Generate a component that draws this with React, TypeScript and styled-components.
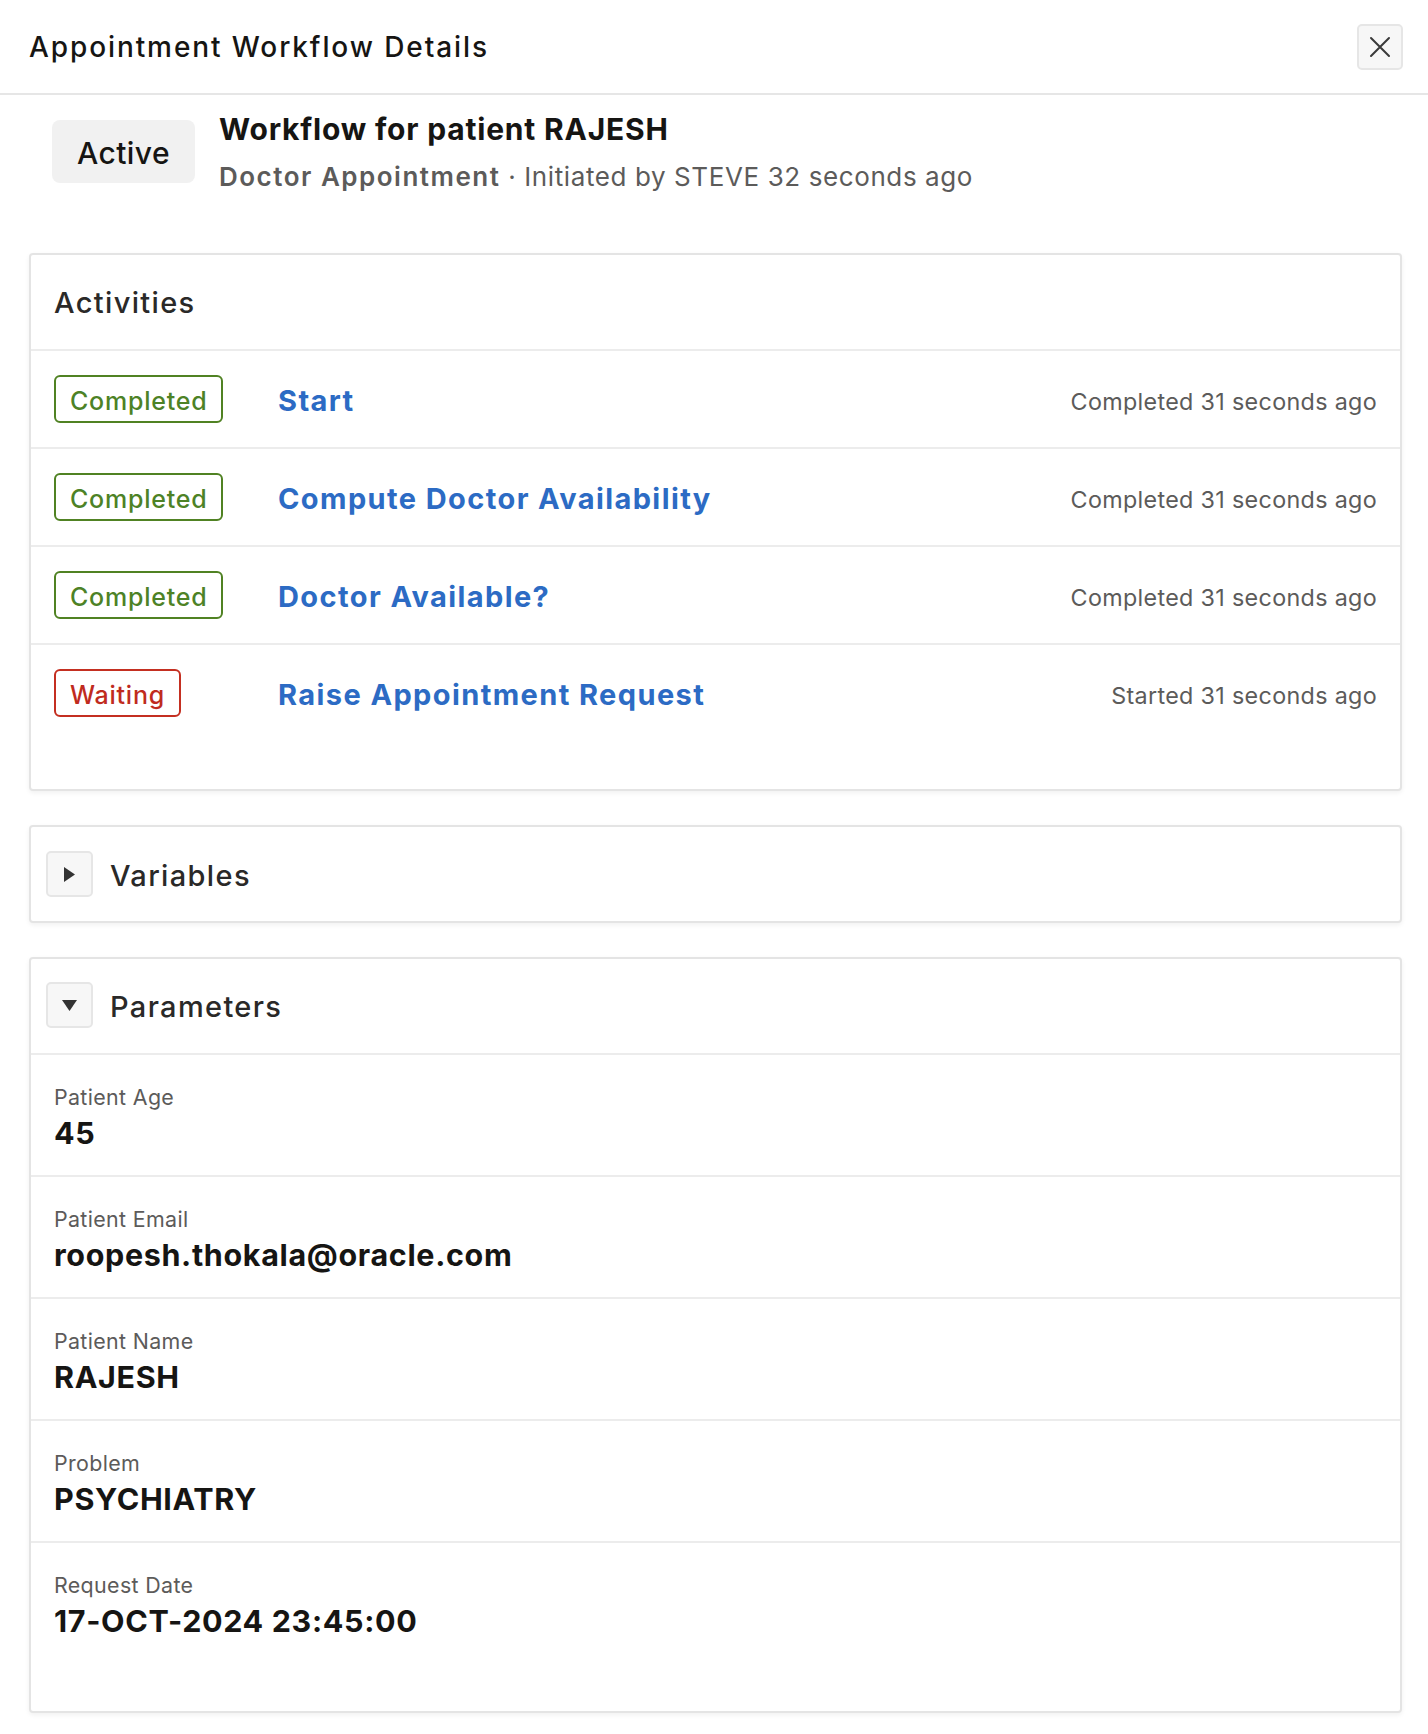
import React from "react";
import styled, { createGlobalStyle } from "styled-components";

const GlobalStyle = createGlobalStyle`
  html, body { margin: 0; padding: 0; background: #ffffff; }
  body {
    font-family: Inter, "Noto Sans", "Liberation Sans", sans-serif;
    color: #161513;
    -webkit-font-smoothing: antialiased;
  }
  * { box-sizing: border-box; }
`;

const Page = styled.div`
  width: 1428px;
  min-height: 1734px;
  background: #fff;
`;

const Header = styled.header`
  height: 95px;
  display: flex;
  align-items: center;
  justify-content: space-between;
  padding: 0 25px 0 29px;
  border-bottom: 2px solid #e6e6e6;
`;

const HeaderTitle = styled.h1`
  margin: 0;
  font-size: 28px;
  line-height: 36px;
  font-weight: 500;
  letter-spacing: 1.9px;
  color: #161513;
`;

const CloseButton = styled.button`
  width: 46px;
  height: 46px;
  padding: 0;
  display: flex;
  align-items: center;
  justify-content: center;
  background: #f7f7f7;
  border: 2px solid #e6e6e6;
  border-radius: 5px;
  color: #3a3a3a;
  cursor: pointer;
`;

const Main = styled.main`
  display: flex;
  flex-direction: column;
  gap: 34px;
  padding: 0 26px 20px 29px;
`;

const Summary = styled.section`
  display: flex;
  align-items: flex-start;
  gap: 24px;
  padding: 16px 0 0 23px;
  margin-bottom: 26px;
`;

const StateBadge = styled.div`
  margin-top: 9px;
  width: 143px;
  height: 63px;
  padding-top: 2px;
  display: flex;
  align-items: center;
  justify-content: center;
  background: #f1f1f1;
  border-radius: 8px;
  font-size: 30px;
  font-weight: 500;
  letter-spacing: 0.45px;
  color: #161513;
`;

const SummaryText = styled.div`
  display: flex;
  flex-direction: column;
`;

const WorkflowTitle = styled.div`
  font-size: 30px;
  line-height: 36px;
  font-weight: 700;
  letter-spacing: 0.8px;
  color: #161513;
`;

const SubLine = styled.div`
  margin-top: 14px;
  font-size: 26px;
  line-height: 32px;
  font-weight: 400;
  letter-spacing: 0.6px;
  color: #5c5b5a;
`;

const Strong = styled.span`
  font-weight: 600;
  letter-spacing: 1.5px;
`;

const Card = styled.section<{ $padBottom?: boolean }>`
  display: flex;
  flex-direction: column;
  border: 2px solid #e4e4e4;
  border-radius: 4px;
  background: #fff;
  box-shadow: 0 2px 5px rgba(0, 0, 0, 0.06);
  padding-bottom: ${(p) => (p.$padBottom ? "48px" : "0")};
`;

const CardHeader = styled.div<{ $divider?: boolean; $withToggle?: boolean }>`
  height: ${(p) => (p.$divider ? "96px" : "94px")};
  display: flex;
  align-items: center;
  gap: 17px;
  padding: 0 24px ${(p) => (p.$divider ? "2px" : "0")} ${(p) => (p.$withToggle ? "15px" : "23px")};
  border-bottom: ${(p) => (p.$divider ? "2px solid #ececec" : "none")};
`;

const CardTitle = styled.h2`
  margin: 0;
  padding-top: 4px;
  font-size: 29px;
  line-height: 36px;
  font-weight: 500;
  letter-spacing: 1.35px;
  color: #2a2928;
`;

const ToggleButton = styled.button`
  width: 47px;
  height: 46px;
  padding: 0;
  display: flex;
  align-items: center;
  justify-content: center;
  background: #f7f7f7;
  border: 2px solid #e6e6e6;
  border-radius: 5px;
  color: #333;
  cursor: pointer;
`;

const ActivityRow = styled.div<{ $last?: boolean }>`
  height: ${(p) => (p.$last ? "96px" : "98px")};
  display: grid;
  grid-template-columns: 224px 1fr auto;
  align-items: center;
  padding: 0 23px 0 23px;
  border-bottom: ${(p) => (p.$last ? "none" : "2px solid #ececec")};
`;

const StatusBadge = styled.span<{ $tone: "success" | "danger" }>`
  justify-self: start;
  height: 48px;
  display: inline-flex;
  align-items: center;
  padding: 3px 14px 0;
  border: 2px solid ${(p) => (p.$tone === "success" ? "#508223" : "#c42f21")};
  border-radius: 6px;
  font-size: 25px;
  font-weight: 500;
  letter-spacing: 0.77px;
  color: ${(p) => (p.$tone === "success" ? "#4d8226" : "#c02b1e")};
`;

const ActivityLink = styled.a`
  padding-top: 4px;
  font-size: 29px;
  line-height: 36px;
  font-weight: 700;
  letter-spacing: 1.4px;
  color: #2c6bc4;
  text-decoration: none;
  cursor: pointer;
`;

const ActivityTime = styled.span`
  padding-top: 4px;
  font-size: 23.3px;
  font-weight: 400;
  letter-spacing: 0.33px;
  color: #5c5b5a;
`;

const ParamRow = styled.div<{ $last?: boolean }>`
  height: ${(p) => (p.$last ? "120px" : "122px")};
  display: flex;
  flex-direction: column;
  padding: 30px 24px 0 23px;
  border-bottom: ${(p) => (p.$last ? "none" : "2px solid #ececec")};
`;

const ParamLabel = styled.div`
  font-size: 21.4px;
  line-height: 24px;
  font-weight: 400;
  letter-spacing: 0.35px;
  color: #5c5b5a;
`;

const ParamValue = styled.div`
  margin-top: 6px;
  font-size: 30.5px;
  line-height: 36px;
  font-weight: 700;
  letter-spacing: 0.65px;
  color: #161513;
`;

const CloseIcon = () => (
  <svg width="22" height="22" viewBox="0 0 22 22" fill="none" stroke="currentColor" strokeWidth="2" strokeLinecap="round">
    <path d="M2 2 L20 20 M20 2 L2 20" />
  </svg>
);

const CaretRight = () => (
  <svg width="13" height="17" viewBox="0 0 13 17">
    <path d="M1 1 L12 8.5 L1 16 Z" fill="currentColor" />
  </svg>
);

const CaretDown = () => (
  <svg width="17" height="13" viewBox="0 0 17 13">
    <path d="M1 1 L16 1 L8.5 12 Z" fill="currentColor" />
  </svg>
);

type Activity = { status: "Completed" | "Waiting"; name: string; time: string };

const activities: Activity[] = [
  { status: "Completed", name: "Start", time: "Completed 31 seconds ago" },
  { status: "Completed", name: "Compute Doctor Availability", time: "Completed 31 seconds ago" },
  { status: "Completed", name: "Doctor Available?", time: "Completed 31 seconds ago" },
  { status: "Waiting", name: "Raise Appointment Request", time: "Started 31 seconds ago" },
];

const parameters = [
  { label: "Patient Age", value: "45" },
  { label: "Patient Email", value: "roopesh.thokala@oracle.com" },
  { label: "Patient Name", value: "RAJESH" },
  { label: "Problem", value: "PSYCHIATRY" },
  { label: "Request Date", value: "17-OCT-2024 23:45:00" },
];

export default function App() {
  return (
    <Page>
      <GlobalStyle />
      <Header>
        <HeaderTitle>Appointment Workflow Details</HeaderTitle>
        <CloseButton aria-label="Close">
          <CloseIcon />
        </CloseButton>
      </Header>
      <Main>
        <Summary>
          <StateBadge>Active</StateBadge>
          <SummaryText>
            <WorkflowTitle>Workflow for patient RAJESH</WorkflowTitle>
            <SubLine>
              <Strong>Doctor Appointment</Strong> · Initiated by STEVE 32 seconds ago
            </SubLine>
          </SummaryText>
        </Summary>

        <Card $padBottom>
          <CardHeader $divider>
            <CardTitle>Activities</CardTitle>
          </CardHeader>
          {activities.map((a, i) => (
            <ActivityRow key={a.name} $last={i === activities.length - 1}>
              <StatusBadge $tone={a.status === "Completed" ? "success" : "danger"}>{a.status}</StatusBadge>
              <ActivityLink>{a.name}</ActivityLink>
              <ActivityTime>{a.time}</ActivityTime>
            </ActivityRow>
          ))}
        </Card>

        <Card>
          <CardHeader $withToggle>
            <ToggleButton aria-label="Expand">
              <CaretRight />
            </ToggleButton>
            <CardTitle>Variables</CardTitle>
          </CardHeader>
        </Card>

        <Card $padBottom>
          <CardHeader $divider $withToggle>
            <ToggleButton aria-label="Collapse">
              <CaretDown />
            </ToggleButton>
            <CardTitle>Parameters</CardTitle>
          </CardHeader>
          {parameters.map((p, i) => (
            <ParamRow key={p.label} $last={i === parameters.length - 1}>
              <ParamLabel>{p.label}</ParamLabel>
              <ParamValue>{p.value}</ParamValue>
            </ParamRow>
          ))}
        </Card>
      </Main>
    </Page>
  );
}
